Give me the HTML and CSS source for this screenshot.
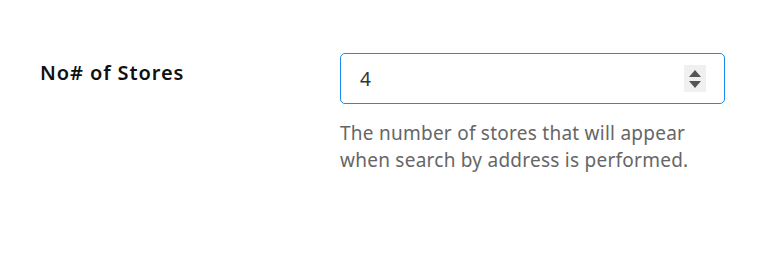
FILE: index.html
```html
<!DOCTYPE html>
<html lang="en">
<head>
    <meta charset="UTF-8">
    <meta name="viewport" content="width=device-width, initial-scale=1.0">
    <title>Store Locator Settings</title>
    <link rel="stylesheet" href="styles.css">
</head>
<body>
    <div class="setting-row">
        <label class="setting-label" for="store-count">No# of Stores</label>
        <div class="setting-field">
            <div class="number-box">
                <input type="text" id="store-count" class="number-input" value="4">
                <span class="spinner">
                    <span class="arrow-up"></span>
                    <span class="arrow-down"></span>
                </span>
            </div>
            <p class="help-text">The number of stores that will appear when search by address is performed.</p>
        </div>
    </div>
</body>
</html>
```

FILE: styles.css
```css
body {
    margin: 0;
    background-color: #fff;
    font-family: "Noto Sans", "Open Sans", sans-serif;
    color: #000;
}

.setting-row {
    display: flex;
    padding: 53px 0 0 40px;
}

.setting-label {
    width: 300px;
    font-size: 20px;
    font-weight: 600;
    letter-spacing: 0.9px;
    line-height: 24px;
    padding-top: 8px;
    color: #111;
}

.setting-field {
    width: 385px;
}

.number-box {
    display: flex;
    align-items: center;
    height: 49px;
    border: 1px solid #1a8ceb;
    border-radius: 5px;
    padding: 0 18px 0 19px;
}

.number-input {
    flex: 1;
    border: none;
    outline: none;
    padding: 0;
    font-family: inherit;
    font-size: 19px;
    color: #333;
    background: transparent;
}

.spinner {
    width: 22px;
    height: 27px;
    background-color: #f0f0f0;
    display: flex;
    flex-direction: column;
    align-items: center;
    justify-content: center;
    gap: 4px;
}

.arrow-up {
    width: 0;
    height: 0;
    border-left: 6px solid transparent;
    border-right: 6px solid transparent;
    border-bottom: 7px solid #555;
}

.arrow-down {
    width: 0;
    height: 0;
    border-left: 6px solid transparent;
    border-right: 6px solid transparent;
    border-top: 7px solid #555;
}

.help-text {
    margin: 16px 0 0 0;
    font-size: 19px;
    letter-spacing: 0.25px;
    line-height: 27px;
    color: #666;
    width: 370px;
}
```
